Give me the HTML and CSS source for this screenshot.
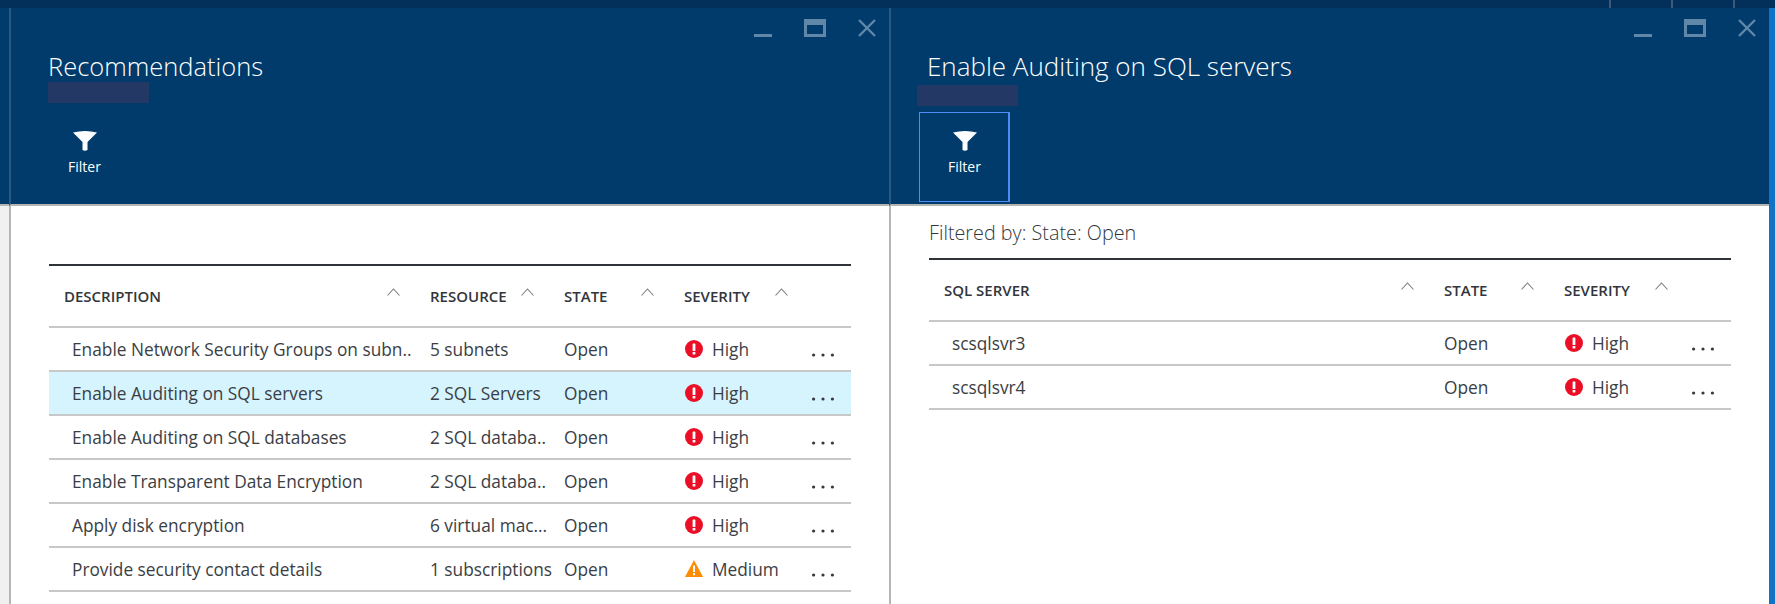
FILE: index.html
```html
<!DOCTYPE html>
<html lang="en">
<head>
  <meta charset="UTF-8" />
  <title>Recommendations</title>
  <link rel="stylesheet" href="styles.css">
</head>
<body>

<svg class="sprites" width="0" height="0" aria-hidden="true">
  <symbol id="i-funnel" viewBox="0 0 24 21">
    <path d="M0 2.5Q12 -0.5 24 2.5L14.5 12V20Q12 21.5 9.5 20V12Z" fill="#fff" />
  </symbol>
  <symbol id="i-chevron" viewBox="0 0 13 16">
    <path d="M0.5 7.5L6.5 1L12.5 7.5" fill="none" stroke="#7a7d80" stroke-width="1.1" />
  </symbol>
  <symbol id="i-high" viewBox="0 0 18 18">
    <circle cx="9" cy="9" r="9" fill="#ea0f27" />
    <rect x="7.6" y="3.5" width="2.8" height="7.5" rx="0.6" fill="#fff" />
    <rect x="7.6" y="12" width="2.8" height="2.6" rx="0.6" fill="#fff" />
  </symbol>
  <symbol id="i-medium" viewBox="0 0 18 18">
    <path d="M9 0L18 17H0Z" fill="#ff8c00" />
    <rect x="8" y="5.5" width="2" height="6.5" fill="#fff" />
    <rect x="8" y="13" width="2" height="2.2" fill="#fff" />
  </symbol>
  <symbol id="i-dots" viewBox="0 0 22 22">
    <circle cx="1.6" cy="17" r="1.6" fill="#35393f" />
    <circle cx="11" cy="17" r="1.6" fill="#35393f" />
    <circle cx="20.4" cy="17" r="1.6" fill="#35393f" />
  </symbol>
  <symbol id="i-min" viewBox="0 0 18 18">
    <rect y="15" width="18" height="3" fill="#6087a8" />
  </symbol>
  <symbol id="i-max" viewBox="0 0 22 18">
    <path d="M0 0H22V18H0ZM3 6V15H19V6Z" fill="#6087a8" fill-rule="evenodd" />
  </symbol>
  <symbol id="i-close" viewBox="0 0 18 18">
    <path d="M1 1L17 17M17 1L1 17" stroke="#6087a8" stroke-width="2.4" fill="none" />
  </symbol>
</svg>

<!-- Barre du haut -->
<div class="topbar">
  <span class="topbar-item"></span>
  <span class="topbar-item"></span>
  <span class="topbar-item topbar-item-last"></span>
</div>

<div class="workspace">
  <div class="gutter">
    <div class="gutter-head"></div>
    <div class="gutter-body"></div>
  </div>

  <!-- Blade 1 -->
  <section class="blade">
    <header class="blade-head">
      <div class="window-controls">
        <svg class="ctl-min"><use href="#i-min" /></svg>
        <svg class="ctl-max"><use href="#i-max" /></svg>
        <svg class="ctl-close"><use href="#i-close" /></svg>
      </div>
      <h1 class="blade-title">Recommendations</h1>
      <div class="redacted"></div>
      <div class="commands">
        <button class="command">
          <svg class="funnel"><use href="#i-funnel" /></svg>
          <span>Filter</span>
        </button>
      </div>
    </header>
    <div class="blade-body blade-body-plain">
      <table class="grid">
        <thead>
          <tr>
            <th class="col-main col-main-narrow"><div class="th-in"><span>Description</span><svg class="chev"><use href="#i-chevron" /></svg></div></th>
            <th class="col-res"><div class="th-in"><span>Resource</span><svg class="chev"><use href="#i-chevron" /></svg></div></th>
            <th class="col-state"><div class="th-in"><span>State</span><svg class="chev"><use href="#i-chevron" /></svg></div></th>
            <th class="col-sev"><div class="th-in"><span>Severity</span><svg class="chev"><use href="#i-chevron" /></svg></div></th>
            <th class="col-act"></th>
          </tr>
        </thead>
        <tbody>
          <tr>
            <td class="cell-main">Enable Network Security Groups on subn..</td>
            <td>5 subnets</td>
            <td>Open</td>
            <td><div class="sev"><svg class="sev-icon"><use href="#i-high" /></svg>High</div></td>
            <td class="cell-act"><svg class="dots"><use href="#i-dots" /></svg></td>
          </tr>
          <tr class="selected">
            <td class="cell-main">Enable Auditing on SQL servers</td>
            <td>2 SQL Servers</td>
            <td>Open</td>
            <td><div class="sev"><svg class="sev-icon"><use href="#i-high" /></svg>High</div></td>
            <td class="cell-act"><svg class="dots"><use href="#i-dots" /></svg></td>
          </tr>
          <tr>
            <td class="cell-main">Enable Auditing on SQL databases</td>
            <td>2 SQL databa..</td>
            <td>Open</td>
            <td><div class="sev"><svg class="sev-icon"><use href="#i-high" /></svg>High</div></td>
            <td class="cell-act"><svg class="dots"><use href="#i-dots" /></svg></td>
          </tr>
          <tr>
            <td class="cell-main">Enable Transparent Data Encryption</td>
            <td>2 SQL databa..</td>
            <td>Open</td>
            <td><div class="sev"><svg class="sev-icon"><use href="#i-high" /></svg>High</div></td>
            <td class="cell-act"><svg class="dots"><use href="#i-dots" /></svg></td>
          </tr>
          <tr>
            <td class="cell-main">Apply disk encryption</td>
            <td>6 virtual mac...</td>
            <td>Open</td>
            <td><div class="sev"><svg class="sev-icon"><use href="#i-high" /></svg>High</div></td>
            <td class="cell-act"><svg class="dots"><use href="#i-dots" /></svg></td>
          </tr>
          <tr>
            <td class="cell-main">Provide security contact details</td>
            <td>1 subscriptions</td>
            <td>Open</td>
            <td><div class="sev"><svg class="sev-icon"><use href="#i-medium" /></svg>Medium</div></td>
            <td class="cell-act"><svg class="dots"><use href="#i-dots" /></svg></td>
          </tr>
        </tbody>
      </table>
    </div>
  </section>

  <!-- Blade 2 -->
  <section class="blade">
    <header class="blade-head">
      <div class="window-controls">
        <svg class="ctl-min"><use href="#i-min" /></svg>
        <svg class="ctl-max"><use href="#i-max" /></svg>
        <svg class="ctl-close"><use href="#i-close" /></svg>
      </div>
      <h1 class="blade-title blade-title-tight">Enable Auditing on SQL servers</h1>
      <div class="redacted redacted-tight"></div>
      <div class="commands commands-tight">
        <button class="command command-focus">
          <svg class="funnel"><use href="#i-funnel" /></svg>
          <span>Filter</span>
        </button>
      </div>
    </header>
    <div class="blade-body">
      <p class="filter-note">Filtered by: State: Open</p>
      <table class="grid">
        <thead>
          <tr>
            <th class="col-main col-main-wide"><div class="th-in"><span>SQL Server</span><svg class="chev"><use href="#i-chevron" /></svg></div></th>
            <th class="col-state"><div class="th-in"><span>State</span><svg class="chev"><use href="#i-chevron" /></svg></div></th>
            <th class="col-sev"><div class="th-in"><span>Severity</span><svg class="chev"><use href="#i-chevron" /></svg></div></th>
            <th class="col-act"></th>
          </tr>
        </thead>
        <tbody>
          <tr>
            <td class="cell-main">scsqlsvr3</td>
            <td>Open</td>
            <td><div class="sev"><svg class="sev-icon"><use href="#i-high" /></svg>High</div></td>
            <td class="cell-act"><svg class="dots"><use href="#i-dots" /></svg></td>
          </tr>
          <tr>
            <td class="cell-main">scsqlsvr4</td>
            <td>Open</td>
            <td><div class="sev"><svg class="sev-icon"><use href="#i-high" /></svg>High</div></td>
            <td class="cell-act"><svg class="dots"><use href="#i-dots" /></svg></td>
          </tr>
        </tbody>
      </table>
    </div>
  </section>

  <div class="edge"></div>
</div>

</body>
</html>
```

FILE: styles.css
```css
html, body {
  margin: 0;
  padding: 0;
  height: 100%;
  overflow: hidden;
}

body {
  font-family: "Open Sans", "Noto Sans", sans-serif;
  color: #3a3e44;
  background: #fff;
  display: flex;
  flex-direction: column;
}

.sprites {
  position: absolute;
}

/* Barre du haut */
.topbar {
  height: 8px;
  flex: none;
  background: #02305a;
  display: flex;
  justify-content: flex-end;
}

.topbar-item {
  width: 60px;
  border-left: 2px solid #3d5a78;
}

.topbar-item-last {
  width: 40px;
}

.workspace {
  flex: 1;
  display: flex;
  min-height: 0;
}

/* Bande de gauche */
.gutter {
  width: 9px;
  flex: none;
  display: flex;
  flex-direction: column;
}

.gutter-head {
  height: 196px;
  background: #003b6c;
  border-bottom: 2px solid #b4b6b4;
}

.gutter-body {
  flex: 1;
  background: #f0f0f0;
}

.edge {
  flex: 1;
  background: #0f73c8;
}

/* Blades */
.blade {
  width: 880px;
  flex: none;
  display: flex;
  flex-direction: column;
}

.blade-head {
  height: 196px;
  flex: none;
  box-sizing: content-box;
  background: #003b6c;
  border-left: 2px solid #2a5883;
  border-bottom: 2px solid #b4b6b4;
  color: #fff;
}

.window-controls {
  display: flex;
  justify-content: flex-end;
  gap: 32px;
  height: 18px;
  padding: 11px 13px 0 0;
}

.ctl-min, .ctl-close {
  width: 18px;
  height: 18px;
}

.ctl-max {
  width: 22px;
  height: 18px;
}

.blade-title {
  margin: 13px 0 0 37px;
  height: 32px;
  line-height: 32px;
  font-size: 25.5px;
  font-weight: 300;
  white-space: nowrap;
}

.blade-title-tight {
  margin-left: 36px;
  font-size: 26px;
}

.redacted {
  width: 101px;
  height: 21px;
  margin: 0 0 0 37px;
  background: #233864;
}

.redacted-tight {
  margin: 3px 0 0 26px;
}

.commands {
  margin: 9px 0 0 28px;
}

.commands-tight {
  margin-top: 6px;
}

.command {
  display: flex;
  flex-direction: column;
  align-items: center;
  width: 91px;
  height: 90px;
  padding: 17px 0 0;
  background: none;
  border: 1px solid transparent;
  color: #fff;
  font-family: inherit;
  font-size: 14px;
}

.command-focus {
  border: 1px solid #4d8cf5;
  border-right-width: 2px;
  padding-left: 1px;
}

.funnel {
  width: 24px;
  height: 21px;
  margin-bottom: 6px;
}

.blade-body {
  flex: 1;
  border-left: 2px solid #b4b6b4;
  padding: 14px 38px 0;
}

.blade-body-plain {
  padding-top: 58px;
}

.filter-note {
  margin: 0 0 14px;
  height: 24px;
  line-height: 25px;
  font-size: 19.8px;
  font-weight: 300;
  color: #33373c;
}

/* Tableaux */
.grid {
  width: 802px;
  table-layout: fixed;
  border-collapse: separate;
  border-spacing: 0;
  font-size: 17.3px;
}

.grid th {
  height: 60px;
  padding: 0 0 0 8px;
  border-top: 2px solid #2f3237;
  border-bottom: 2px solid #c8c8c8;
  text-align: left;
  font-size: 15px;
  font-weight: 600;
  text-transform: uppercase;
  color: #32363c;
}

.th-in {
  display: flex;
  align-items: center;
  justify-content: space-between;
  padding-right: 22px;
}

.chev {
  width: 13px;
  height: 16px;
  flex: none;
}

.grid td {
  height: 42px;
  padding: 0 0 0 8px;
  border-bottom: 2px solid #c8c8c8;
  white-space: nowrap;
  overflow: hidden;
}

.selected td {
  background: #d6f4fd;
}

.grid .col-main {
  padding-left: 15px;
}

.col-main-narrow {
  width: 358px;
}

.col-main-wide {
  width: 492px;
}

.col-res {
  width: 126px;
}

.col-state {
  width: 112px;
}

.col-sev {
  width: 126px;
}

.col-act {
  width: 33px;
}

.grid .cell-main {
  padding-left: 23px;
}

.grid .cell-act {
  padding-left: 2px;
}

.sev {
  display: flex;
  align-items: center;
  gap: 9px;
  padding-left: 1px;
}

.sev-icon {
  width: 18px;
  height: 18px;
  flex: none;
}

.dots {
  display: block;
  width: 22px;
  height: 22px;
}
```
